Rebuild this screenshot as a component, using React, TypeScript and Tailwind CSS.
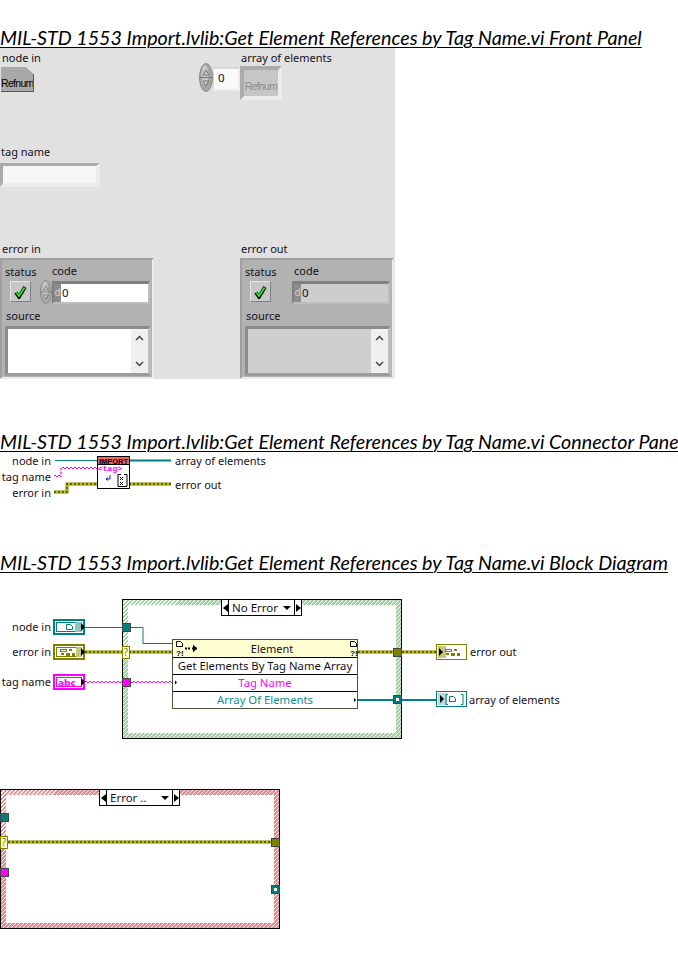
import React from "react";

const labelFont = "font-['Noto_Sans',sans-serif] text-[11px] leading-[14px] text-[#14101c] whitespace-nowrap";

function Heading({ children, className = "" }: { children: React.ReactNode; className?: string }) {
  return (
    <h2 className={`h-[21px] whitespace-nowrap font-['Lato',sans-serif] text-[19.7px] italic leading-[21px] text-black underline decoration-1 underline-offset-2 ${className}`}>
      {children}
    </h2>
  );
}

function Label({ children, className = "" }: { children: React.ReactNode; className?: string }) {
  return <span className={`absolute ${labelFont} ${className}`}>{children}</span>;
}

function Text({ children, className = "" }: { children: React.ReactNode; className?: string }) {
  return <div className={`h-[14px] ${labelFont} ${className}`}>{children}</div>;
}

function Spinner({ className = "" }: { className?: string }) {
  return (
    <svg className={`shrink-0 ${className}`} viewBox="0 0 14 29" preserveAspectRatio="none">
      <ellipse cx="7" cy="14.5" rx="6.5" ry="14" fill="#a6a6a6" stroke="#8a8a8a" />
      <ellipse cx="6" cy="12" rx="3.5" ry="10" fill="#c8c8c8" />
      <path d="M0.5 14.5h13" stroke="#777" />
      <path d="M7 7l-3 5h6z" fill="none" stroke="#777" />
      <path d="M7 23l-3-5h6z" fill="none" stroke="#777" />
    </svg>
  );
}

function Refnum({ disabled }: { disabled?: boolean }) {
  return disabled ? (
    <div className="h-[26px] w-[34px] overflow-hidden whitespace-nowrap bg-[#c6c6c6] pt-[9px] text-center font-['Liberation_Sans',sans-serif] text-[10.5px] leading-[15px] tracking-[-0.7px] text-[#8c8c8c] [clip-path:polygon(0_0,76%_0,100%_34%,100%_100%,0_100%)]">
      Refnum
    </div>
  ) : (
    <div className="h-[25px] w-[33px] overflow-hidden whitespace-nowrap border-r border-b border-[#555] bg-[#a9a9a9] pt-[9px] text-center font-['Liberation_Sans',sans-serif] text-[10.5px] leading-[15px] tracking-[-0.7px] text-black [clip-path:polygon(0_0,76%_0,100%_30%,100%_100%,0_100%)]">
      Refnum
    </div>
  );
}

function CheckButton() {
  return (
    <div className="ml-[8px] flex h-[20px] w-[20px] items-center justify-center border-t border-l border-[#e4e4e4] bg-[#c8c8c8] shadow-[1px_1px_0_#808080]">
      <svg width="13" height="14" viewBox="0 0 13 14">
        <path d="M2 7.5l3 4.5L11 2" fill="none" stroke="#000" strokeWidth="3.6" />
        <path d="M2.5 7.5l2.5 3.5L10.5 2.5" fill="none" stroke="#1aff1a" strokeWidth="1.8" />
      </svg>
    </div>
  );
}

function ScrollBar() {
  return (
    <div className="flex w-[17px] flex-col items-center justify-between bg-[#f0f0f0] py-[6px]">
      <svg width="9" height="6" viewBox="0 0 9 6"><path d="M1 5l3.5-3.5L8 5" fill="none" stroke="#444" strokeWidth="1.5" /></svg>
      <svg width="9" height="6" viewBox="0 0 9 6"><path d="M1 1l3.5 3.5L8 1" fill="none" stroke="#444" strokeWidth="1.5" /></svg>
    </div>
  );
}

// error in / error out cluster, the only difference is control vs indicator
function ErrorCluster({ out }: { out?: boolean }) {
  return (
    <div className="h-[121px] w-[154px] border-2 border-t-[#a0a0a0] border-l-[#a0a0a0] border-r-[#ececec] border-b-[#ececec] bg-[#b2b2b2]">
      <div className="flex">
        <div className="w-[38px] pt-[5px]">
          <Text className="pl-[3px]">status</Text>
          <div className="mt-[2px]"><CheckButton /></div>
        </div>
        <div className="pt-[4px]">
          <Text className={out ? "pl-[14px]" : "pl-[12px]"}>code</Text>
          <div className={`mt-[2px] flex h-[24px] items-center ${out ? "pl-[12px]" : ""}`}>
            {!out && <Spinner className="h-[24px] w-[12px]" />}
            <div className="flex h-[23px] w-[98px] border-t-[3px] border-l-[2px] border-b-2 border-r-2 border-t-[#808080] border-l-[#808080] border-b-[#bdbdbd] border-r-[#bdbdbd]">
              <div className="w-[7px] bg-[#8c8c8c] text-center font-['Noto_Sans',sans-serif] text-[10px] leading-[17px] text-[#d0d0d0]">d</div>
              <div className={`flex-1 pl-px ${labelFont} !leading-[17px] !text-[11.5px] ${out ? "bg-[#cdcdcd]" : "bg-white"}`}>0</div>
            </div>
          </div>
        </div>
      </div>
      <Text className="mt-[5px] pl-[4px]">source</Text>
      <div className="ml-[3px] mt-[3px] flex h-[50px] w-[146px] border-[3px] border-t-[#8c8c8c] border-l-[#8c8c8c] border-b-[#9c9c9c] border-r-[#bdbdbd]">
        <div className={`flex-1 ${out ? "bg-[#cfcfcf]" : "bg-white"}`} />
        <ScrollBar />
      </div>
    </div>
  );
}

function FrontPanel() {
  return (
    <div className="flex h-[331px] w-[395px] bg-[#e1e1e1] pt-[3px]">
      <div className="w-[199px]">
        <Text className="pl-[2px]">node in</Text>
        <div className="ml-[1px] mt-[2px]"><Refnum /></div>
        <Text className="mt-[53px] pl-[1px]">tag name</Text>
        <div className="mt-[4px] h-[24px] w-[100px] border-t-[3px] border-l-[3px] border-r-[4px] border-b-[4px] border-t-[#aaaaaa] border-l-[#aaaaaa] border-r-[#ececec] border-b-[#ececec] bg-[#f6f6f6]" />
        <Text className="mt-[55px] pl-[2px]">error in</Text>
        <div className="mt-[2px]"><ErrorCluster /></div>
      </div>
      <div className="flex-1">
        <div className="flex items-start">
          <Spinner className="mt-[12px] h-[29px] w-[14px]" />
          <div className={`mt-[16px] h-[24px] w-[27px] border-t-2 border-l border-r-2 border-b-2 border-t-[#d8d8d8] border-l-[#d8d8d8] border-r-[#ececec] border-b-[#ececec] bg-[#fafafa] pl-[4px] ${labelFont} !leading-[18px] !text-[11.5px]`}>0</div>
          <div>
            <Text className="pl-px">array of elements</Text>
            <div className="mt-px h-[34px] w-[42px] border-4 border-t-[#ababab] border-l-[#ababab] border-r-[#ececec] border-b-[#ececec] bg-[#c6c6c6]">
              <Refnum disabled />
            </div>
          </div>
        </div>
        <div className="ml-[41px] mt-[142px]">
          <Text className="pl-px">error out</Text>
          <div className="mt-[2px]"><ErrorCluster out /></div>
        </div>
      </div>
    </div>
  );
}

// yellow/black error cluster wire
function ErrorWire({ d }: { d: string }) {
  return (
    <g fill="none">
      <path d={d} stroke="#808000" strokeWidth="3" />
      <path d={d} stroke="#ffff00" strokeWidth="1" />
      <path d={d} stroke="#000" strokeWidth="1" strokeDasharray="2 2" />
    </g>
  );
}

// string wire is a little zigzag: two offset dashes next to each other
function StringWire({ d }: { d: string }) {
  return (
    <g fill="none" stroke="#ff00ff" strokeDasharray="2 2">
      <path d={d} transform="translate(0 -0.5)" />
      <path d={d} transform="translate(0 0.5)" strokeDashoffset="2" />
    </g>
  );
}

function ConnectorPane() {
  return (
    <div className="relative h-[79px]">
      <svg className="absolute inset-0" width="678" height="79" viewBox="0 452 678 79">
        <path d="M55 460.5H97" stroke="#008080" />
        <path d="M129 460.5H171" stroke="#008080" strokeWidth="2" />
        <StringWire d="M54 476H61V468H97" />
        <ErrorWire d="M54 492H67V484H97" />
        <ErrorWire d="M129 484H171" />
        <rect x="97.5" y="456.5" width="32" height="32" fill="#fff" stroke="#000" />
        <rect x="98" y="457" width="31" height="7" fill="#f06464" />
        <path d="M97 464.5H130" stroke="#000" />
        <text x="113.5" y="463.5" textAnchor="middle" fontFamily="Liberation Sans, sans-serif" fontWeight="700" fontSize="7.5" fill="#000">IMPORT</text>
        <text x="98" y="471" fontFamily="Liberation Mono, monospace" fontWeight="700" fontSize="8" fill="#ff00ff">{"<tag>"}</text>
        <path d="M110 475v4h-4M108 477.5l-2 1.5 2 1.5" fill="none" stroke="#1c1ccc" />
        <path d="M121 474.5h-3v12h9v-12h-3" fill="none" stroke="#000" />
        <path d="M120 477l3 3m0-3l-3 3M120 482l3 3m0-3l-3 3" stroke="#000" />
      </svg>
      <div className="absolute left-0 top-[2px] flex w-[51px] flex-col items-end gap-[2px]">
        <Text>node in</Text>
        <Text>tag name</Text>
        <Text>error in</Text>
      </div>
      <div className="absolute left-[175px] top-[2px] flex flex-col gap-[10px]">
        <Text>array of elements</Text>
        <Text>error out</Text>
      </div>
    </div>
  );
}

function DocGlyph({ x, y, color = "#008080" }: { x: number; y: number; color?: string }) {
  return <path d={`M${x + 0.5} ${y + 0.5}h4l2 2v3h-6z`} fill="#fff" stroke={color} />;
}

function ClusterGlyph({ x, y, color }: { x: number; y: number; color: string }) {
  return (
    <g fill={color}>
      <rect x={x + 0.5} y={y + 0.5} width="6" height="2" fill="none" stroke={color} />
      <rect x={x + 9} y={y} width="3" height="2" />
      <rect x={x + 1} y={y + 4} width="3" height="2" />
      <rect x={x + 6} y={y + 4} width="4" height="3" />
      <rect x={x + 12} y={y + 4} width="3" height="3" />
    </g>
  );
}

function Tri({ x, y }: { x: number; y: number }) {
  return <path d={`M${x} ${y - 4}l4 4-4 4z`} fill="#000" />;
}

function Selector({ children, className = "" }: { children: React.ReactNode; className?: string }) {
  return (
    <div className={`absolute flex h-[17px] w-[81px] items-stretch border border-black bg-white ${className}`}>
      <div className="flex w-[7px] items-center justify-center border-r border-black">
        <div className="h-0 w-0 border-y-[4px] border-r-[5px] border-y-transparent border-r-black" />
      </div>
      <div className="flex flex-1 items-center justify-between px-[3px]">
        <span className={`${labelFont} !text-[11.5px]`}>{children}</span>
        <div className="h-0 w-0 border-x-[4px] border-t-[4px] border-x-transparent border-t-black" />
      </div>
      <div className="flex w-[7px] items-center justify-center border-l border-black">
        <div className="h-0 w-0 border-y-[4px] border-l-[5px] border-y-transparent border-l-black" />
      </div>
    </div>
  );
}

function CaseFrame({ error, className = "" }: { error?: boolean; className?: string }) {
  return (
    <div
      className={`absolute h-[140px] w-[280px] border border-black p-[5px] ${
        error
          ? "bg-[repeating-linear-gradient(135deg,#ff8080_0,#ff8080_2.1px,#ffffff_2.1px,#ffffff_2.83px)]"
          : "bg-[repeating-linear-gradient(135deg,#98d898_0,#98d898_2.1px,#ffffff_2.1px,#ffffff_2.83px)]"
      } ${className}`}
    >
      <div className="h-full w-full bg-white" />
    </div>
  );
}

function PropertyNode() {
  const row = "flex h-[17px] items-center justify-center border-t border-black font-['Noto_Sans',sans-serif] text-[11.3px] leading-[14px] whitespace-nowrap";
  return (
    <div className="absolute left-[172px] top-[66px] w-[186px] border border-[#4f4f3c] bg-white">
      <div className={`${labelFont} flex h-[17px] items-center justify-center bg-[#ffffd2] pl-[14px]`}>Element</div>
      <div className={`${row} text-[#14101c]`}>Get Elements By Tag Name Array</div>
      <div className={`${row} text-[#ff00ff]`}>Tag Name</div>
      <div className={`${row} text-[#0f8f8f]`}>Array Of Elements</div>
    </div>
  );
}

function BlockDiagram() {
  return (
    <div className="relative h-[370px]">
      <CaseFrame className="left-[122px] top-[26px]" />
      <CaseFrame error className="left-0 top-[216px]" />
      <PropertyNode />

      <svg className="absolute inset-0" width="678" height="370" viewBox="0 573 678 370">
        {/* no error case wires */}
        <path d="M85 627.5H143V643.5H172" fill="none" stroke="#008080" />
        <ErrorWire d="M85 652H172" />
        <StringWire d="M85 682H172" />
        <ErrorWire d="M358 652H436" />
        <path d="M358 700H436" stroke="#008080" strokeWidth="2" />

        {/* input terminals */}
        <rect x="54" y="620" width="30" height="14" fill="#fff" stroke="#008080" strokeWidth="2" />
        <rect x="56.5" y="622.5" width="25" height="9" fill="#fff" stroke="#008080" />
        <rect x="75" y="622" width="7" height="10" fill="#8cc4c4" />
        <DocGlyph x={66} y={624} />
        <Tri x={81} y={627} />

        <rect x="54" y="645" width="30" height="14" fill="#fff" stroke="#808000" strokeWidth="2" />
        <rect x="56.5" y="647.5" width="25" height="9" fill="#fff" stroke="#808000" />
        <rect x="76" y="647" width="6" height="10" fill="#c6c680" />
        <ClusterGlyph x={60} y={649} color="#808000" />
        <Tri x={81} y={652} />

        <rect x="54" y="675" width="30" height="14" fill="#fff" stroke="#ff00ff" strokeWidth="2" />
        <rect x="56.5" y="677.5" width="25" height="9" fill="#fff" stroke="#ff00ff" />
        <text x="58" y="685.5" fontFamily="DejaVu Sans, sans-serif" fontWeight="700" fontSize="9" fill="#ff00ff">abc</text>
        <Tri x={81} y={682} />

        {/* tunnels */}
        <rect x="122.5" y="623.5" width="8" height="8" fill="#008080" stroke="#444" />
        <rect x="122.5" y="646.5" width="7" height="12" fill="#ffffc8" stroke="#808000" />
        <text x="126" y="656" textAnchor="middle" fontFamily="Noto Sans, sans-serif" fontSize="10" fill="#808000">?</text>
        <rect x="122.5" y="678.5" width="8" height="8" fill="#ff00ff" stroke="#444" />
        <rect x="393.5" y="648.5" width="8" height="8" fill="#808000" stroke="#444" />
        <rect x="393.5" y="695.5" width="8" height="8" fill="#008080" stroke="#444" />
        <rect x="396" y="698" width="3" height="3" fill="#fff" />

        {/* property node decorations */}
        <DocGlyph x={176} y={641} color="#000" />
        <text x="176" y="656" fontFamily="Liberation Sans, sans-serif" fontWeight="700" fontSize="8" fill="#000">?!</text>
        <path d="M185 648.5h5m2 0h6" stroke="#000" strokeWidth="2" strokeDasharray="2 1" />
        <path d="M193 644.5l4 4-4 4z" fill="#000" />
        <DocGlyph x={350} y={641} color="#000" />
        <text x="350" y="656" fontFamily="Liberation Sans, sans-serif" fontWeight="700" fontSize="8" fill="#000">?!</text>
        <path d="M175 680.5l2 2-2 2z" fill="#000" />
        <path d="M354 698l2 2-2 2z" fill="#000" />

        {/* output indicators */}
        <rect x="436.5" y="644.5" width="30" height="15" fill="#fff" stroke="#808000" />
        <rect x="438" y="646" width="8" height="12" fill="#c6c680" />
        <Tri x={439} y={652} />
        <ClusterGlyph x={445} y={649} color="#808000" />
        <rect x="436.5" y="691.5" width="30" height="15" fill="#fff" stroke="#008080" />
        <rect x="438" y="693" width="9" height="12" fill="#b4dcdc" />
        <Tri x={440} y={699} />
        <path d="M448 694.5h-2v10h2M461 694.5h2v10h-2" fill="none" stroke="#008080" />
        <DocGlyph x={449} y={696} />

        {/* error case */}
        <ErrorWire d="M8 842H271" />
        <rect x="0.5" y="813.5" width="8" height="8" fill="#008080" stroke="#444" />
        <rect x="0.5" y="836.5" width="7" height="12" fill="#ffffc8" stroke="#808000" />
        <text x="4" y="846" textAnchor="middle" fontFamily="Noto Sans, sans-serif" fontSize="10" fill="#808000">?</text>
        <rect x="0.5" y="868.5" width="8" height="8" fill="#ff00ff" stroke="#444" />
        <rect x="271.5" y="838.5" width="8" height="8" fill="#808000" stroke="#444" />
        <rect x="271.5" y="885.5" width="8" height="8" fill="#008080" stroke="#444" />
        <rect x="274" y="888" width="3" height="3" fill="#fff" />
      </svg>

      <Selector className="left-[221px] top-[26px]">No Error</Selector>
      <Selector className="left-[99px] top-[216px]">Error ..</Selector>
      <Label className="right-[627px] top-[47px]">node in</Label>
      <Label className="right-[627px] top-[72px]">error in</Label>
      <Label className="right-[627px] top-[102px]">tag name</Label>
      <Label className="left-[470px] top-[72px]">error out</Label>
      <Label className="left-[469px] top-[120px]">array of elements</Label>
    </div>
  );
}

export default function App() {
  return (
    <div className="h-[979px] w-[678px] overflow-hidden bg-white pt-[27px]">
      <Heading>MIL-STD 1553 Import.lvlib:Get Element References by Tag Name.vi Front Panel</Heading>
      <FrontPanel />
      <Heading className="mt-[52px]">MIL-STD 1553 Import.lvlib:Get Element References by Tag Name.vi Connector Pane</Heading>
      <ConnectorPane />
      <Heading className="mt-[21px]">MIL-STD 1553 Import.lvlib:Get Element References by Tag Name.vi Block Diagram</Heading>
      <BlockDiagram />
    </div>
  );
}
